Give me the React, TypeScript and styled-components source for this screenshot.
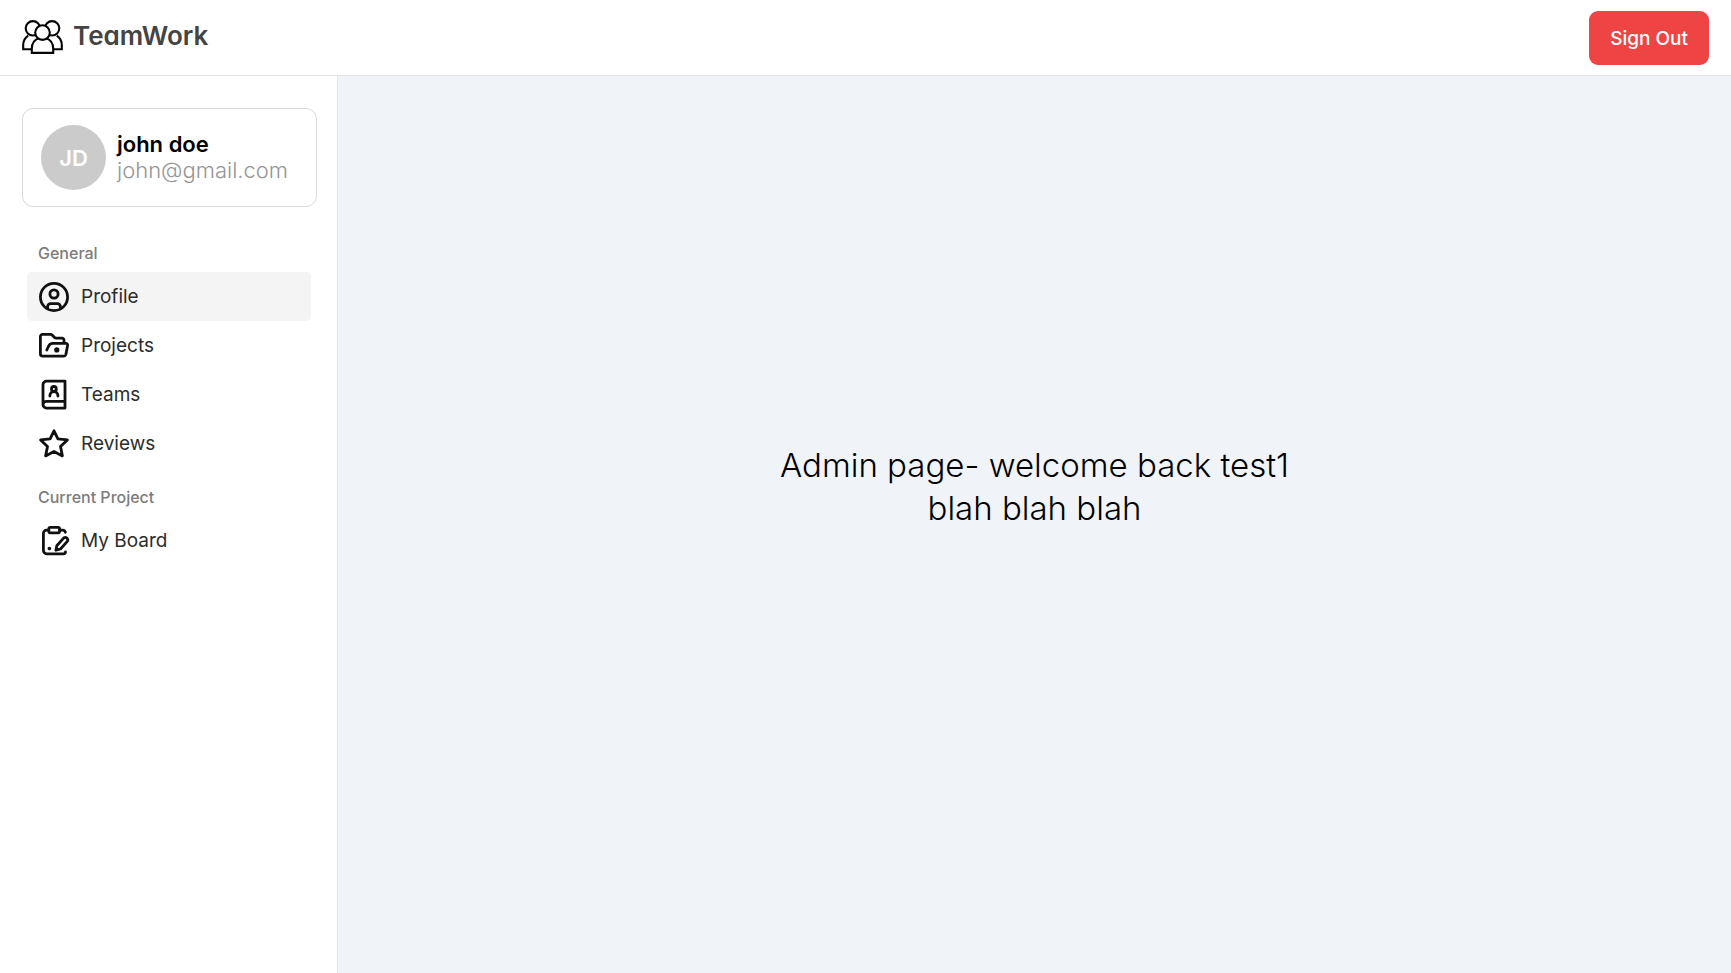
import React from "react";
import styled, { createGlobalStyle } from "styled-components";

const GlobalStyle = createGlobalStyle`
  *, *::before, *::after { box-sizing: border-box; }
  body {
    margin: 0;
    font-family: Inter, "Liberation Sans", sans-serif;
    color: #0b0b0c;
    background: #fff;
  }
`;

const Page = styled.div`
  min-height: 100vh;
  display: flex;
  flex-direction: column;
`;

const Header = styled.header`
  display: flex;
  align-items: center;
  justify-content: space-between;
  padding: 11px 22px 10px;
  background: #fff;
  border-bottom: 1px solid #e2e4e8;
`;

const Brand = styled.a`
  display: flex;
  align-items: center;
  gap: 10px;
  padding-bottom: 2px;
  color: #444;
  font-size: 26px;
  line-height: 32px;
  font-weight: 600;
  font-feature-settings: "cv11";
  text-decoration: none;
`;

const BrandName = styled.span`
  padding-bottom: 2px;
`;

const SignOutButton = styled.button`
  height: 54px;
  padding: 0 21px;
  border: 0;
  border-radius: 9px;
  background: #ef4444;
  color: #fff;
  font-family: inherit;
  font-size: 19px;
  font-weight: 500;
  cursor: pointer;
`;

const Body = styled.div`
  flex: 1;
  display: flex;
`;

const Sidebar = styled.aside`
  flex: 0 0 338px;
  padding: 32px 20px 22px 22px;
  border-right: 1px solid #e2e5ea;
  background: #fff;
`;

const UserCard = styled.section`
  display: flex;
  align-items: center;
  gap: 11px;
  padding: 16px 18px;
  border: 1px solid #dadada;
  border-radius: 11px;
`;

const Avatar = styled.div`
  display: flex;
  align-items: center;
  justify-content: center;
  flex: none;
  width: 65px;
  height: 65px;
  border-radius: 50%;
  background: #cbcbcb;
  color: #fff;
  font-size: 22px;
  font-weight: 600;
`;

const UserText = styled.div`
  padding-bottom: 1px;
  font-size: 22px;
  line-height: 26px;
`;

const UserName = styled.div`
  color: #000;
  font-weight: 600;
`;

const UserEmail = styled.div`
  color: #959595;
  font-weight: 300;
`;

const Nav = styled.nav`
  padding: 32px 6px 0 5px;
`;

const NavHeading = styled.h2`
  margin: 0;
  padding: 0 11px;
  font-size: 16px;
  line-height: 28px;
  font-weight: 500;
  color: #7c7c7c;
`;

const NavGroup = styled.ul`
  margin: 5px 0 15px;
  padding: 0;
  list-style: none;
`;

const NavLink = styled.a<{ $active?: boolean }>`
  display: flex;
  align-items: center;
  gap: 12px;
  height: 49px;
  padding: 0 12px;
  border-radius: 5px;
  background: ${(p) => (p.$active ? "#f4f4f4" : "transparent")};
  color: #2c2c2c;
  font-size: 19px;
  font-weight: 400;
  text-decoration: none;
`;

const Main = styled.main`
  flex: 1;
  display: flex;
  align-items: center;
  justify-content: center;
  padding-bottom: 75px;
  background: #f0f4f9;
`;

const Welcome = styled.h1`
  margin: 0;
  color: #000;
  font-size: 33px;
  line-height: 43px;
  font-weight: 300;
  text-align: center;
`;

const LineIcon = styled.svg.attrs({
  width: 30,
  height: 30,
  viewBox: "0 0 30 30",
  "aria-hidden": true,
})`
  flex: none;
  overflow: visible;
  fill: none;
  stroke: #111;
  stroke-width: 2.8;
  stroke-linecap: round;
  stroke-linejoin: round;
`;

const LogoIcon = () => (
  <svg width="41" height="34" viewBox="0 0 41 34" fill="#fff" stroke="#050505" strokeWidth="2.1" aria-hidden="true">
    <path d="M6.2 15.6C2.8 17.8 1.2 21.2 1.2 25.2V29.3H39.8V25.2C39.8 21.2 38.2 17.8 34.8 15.6" />
    <circle cx="10.9" cy="8.3" r="7.2" />
    <circle cx="30.1" cy="8.3" r="7.2" />
    <path d="M9.8 32.9V28.7C9.8 23.4 12.6 19.6 17 18.2H24C28.4 19.6 31.2 23.4 31.2 28.7V32.9Z" />
    <circle cx="20.5" cy="12.6" r="7.3" />
  </svg>
);

const ProfileIcon = () => (
  <LineIcon>
    <circle cx="15" cy="15" r="13.6" />
    <circle cx="15" cy="12" r="4.1" />
    <path d="M8.6 26v-1.4a3 3 0 0 1 3-3h6.8a3 3 0 0 1 3 3V26" />
  </LineIcon>
);

const FolderIcon = () => (
  <LineIcon>
    <path d="M25 12V9.2a2 2 0 0 0-2-2H17a2 2 0 0 1-1.4-.6L13.1 4a2 2 0 0 0-1.4-.6H3.6a2.2 2.2 0 0 0-2.2 2.2v17.2A2.4 2.4 0 0 0 3.8 25.2H24.4a2.6 2.6 0 0 0 2.5-2L28.6 14.4a1.6 1.6 0 0 0-1.6-2H13.8A4.5 4.5 0 0 0 9.6 15.2L7.8 19" />
    <circle cx="17.8" cy="18.9" r="2.6" fill="#111" stroke="none" />
  </LineIcon>
);

const TeamsIcon = () => (
  <LineIcon>
    <path d="M26 1.2H7.5A3.5 3.5 0 0 0 4 4.7v19.9a3.5 3.5 0 0 0 3.5 3.5H26ZM26 21.3H7.5A3.5 3.5 0 0 0 4 24.6" />
    <path d="M10.9 16.1v-.6a4 4 0 0 1 8 0v.6" />
    <circle cx="14.9" cy="8.9" r="2.4" />
  </LineIcon>
);

const StarIcon = () => (
  <LineIcon>
    <path d="M15 1.8 18.9 9.9 28.4 10.9 21.5 17.5 23.4 26.9 15 22.5 6.6 26.9 8.5 17.5 1.6 10.9 11.1 9.9Z" />
  </LineIcon>
);

const BoardIcon = () => (
  <LineIcon>
    <rect x="9.8" y="1.4" width="10.8" height="5.4" rx="1.6" />
    <path d="M9.8 4.2H7.6A3.2 3.2 0 0 0 4.4 7.4v17.2a3.2 3.2 0 0 0 3.2 3.2H24.5a2 2 0 0 0 2-2M20.6 4.2h3a3 3 0 0 1 2.8 2" />
    <circle cx="10.4" cy="22.6" r="1.8" fill="#111" stroke="none" />
    <path d="M16.9 24.2 17.8 19.7 24.6 12.1A2.5 2.5 0 0 1 28.3 15.4L21.5 23Z" />
  </LineIcon>
);

type NavItem = { label: string; icon: React.ReactNode; active?: boolean };

const sections: { heading: string; items: NavItem[] }[] = [
  {
    heading: "General",
    items: [
      { label: "Profile", icon: <ProfileIcon />, active: true },
      { label: "Projects", icon: <FolderIcon /> },
      { label: "Teams", icon: <TeamsIcon /> },
      { label: "Reviews", icon: <StarIcon /> },
    ],
  },
  {
    heading: "Current Project",
    items: [{ label: "My Board", icon: <BoardIcon /> }],
  },
];

export default function App() {
  return (
    <>
      <GlobalStyle />
      <Page>
        <Header>
          <Brand href="#">
            <LogoIcon />
            <BrandName>TeamWork</BrandName>
          </Brand>
          <SignOutButton type="button">Sign Out</SignOutButton>
        </Header>
        <Body>
          <Sidebar>
            <UserCard>
              <Avatar>JD</Avatar>
              <UserText>
                <UserName>john doe</UserName>
                <UserEmail>john@gmail.com</UserEmail>
              </UserText>
            </UserCard>
            <Nav>
              {sections.map((section) => (
                <React.Fragment key={section.heading}>
                  <NavHeading>{section.heading}</NavHeading>
                  <NavGroup>
                    {section.items.map((item) => (
                      <li key={item.label}>
                        <NavLink href="#" $active={item.active} aria-current={item.active ? "page" : undefined}>
                          {item.icon}
                          {item.label}
                        </NavLink>
                      </li>
                    ))}
                  </NavGroup>
                </React.Fragment>
              ))}
            </Nav>
          </Sidebar>
          <Main>
            <Welcome>
              Admin page- welcome back test1
              <br />
              blah blah blah
            </Welcome>
          </Main>
        </Body>
      </Page>
    </>
  );
}
